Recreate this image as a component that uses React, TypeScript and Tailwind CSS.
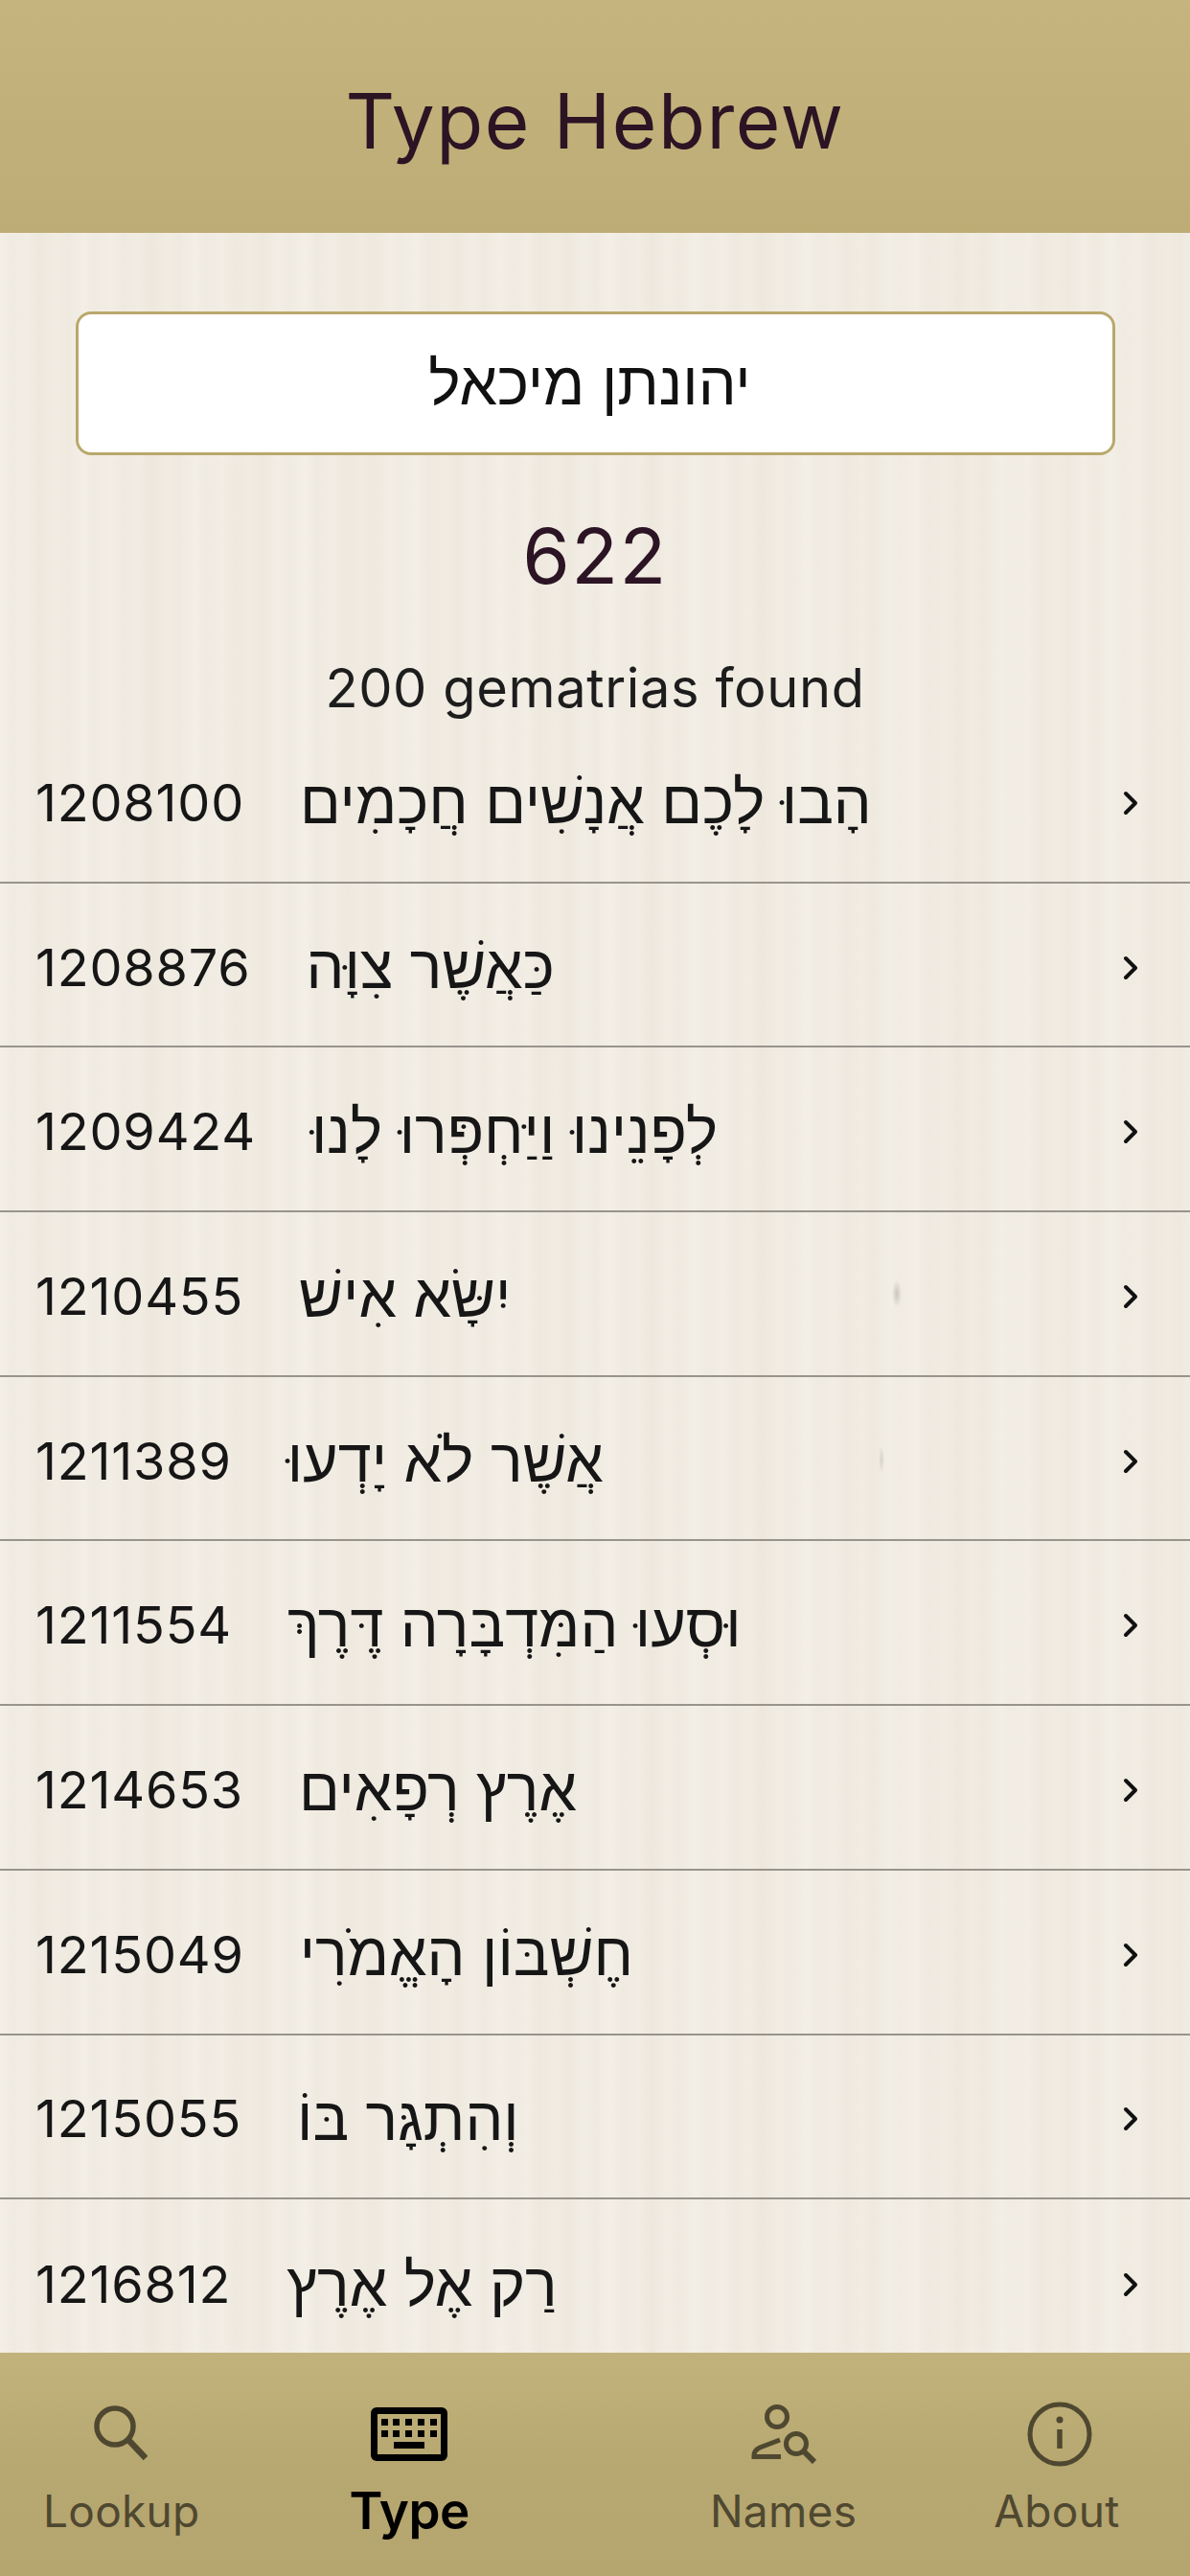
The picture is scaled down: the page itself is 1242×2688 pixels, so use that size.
const rows = [
  { code: "1208100", text: "הָבוּ לָכֶם אֲנָשִׁים חֲכָמִים" },
  { code: "1208876", text: "כַּאֲשֶׁר צִוָּה" },
  { code: "1209424", text: "לְפָנֵינוּ וַיַּחְפְּרוּ לָנוּ" },
  { code: "1210455", text: "יִשָּׂא אִישׁ" },
  { code: "1211389", text: "אֲשֶׁר לֹא יָדְעוּ" },
  { code: "1211554", text: "וּסְעוּ הַמִּדְבָּרָה דֶּרֶךְ" },
  { code: "1214653", text: "אֶרֶץ רְפָאִים" },
  { code: "1215049", text: "חֶשְׁבּוֹן הָאֱמֹרִי" },
  { code: "1215055", text: "וְהִתְגָּר בּוֹ" },
  { code: "1216812", text: "רַק אֶל אֶרֶץ" },
];

function SearchIcon() {
  return (
    <svg viewBox="0 0 58 60" className="h-[60px] w-[58px]" fill="none" stroke="currentColor" strokeWidth="5.5">
      <circle cx="22" cy="22" r="19" />
      <path d="M36 36 L54 55" strokeWidth="6.5" />
    </svg>
  );
}

function KeyboardIcon() {
  return (
    <svg viewBox="0 0 80 56" className="h-[56px] w-[80px]" fill="currentColor">
      <path
        fillRule="evenodd"
        d="M6 0h68a6 6 0 0 1 6 6v44a6 6 0 0 1-6 6H6a6 6 0 0 1-6-6V6a6 6 0 0 1 6-6zm1 7v42h66V7z"
      />
      <rect x="11" y="12" width="7" height="7" />
      <rect x="23" y="12" width="7" height="7" />
      <rect x="36" y="12" width="7" height="7" />
      <rect x="49" y="12" width="7" height="7" />
      <rect x="62" y="12" width="7" height="7" />
      <rect x="11" y="24" width="7" height="7" />
      <rect x="23" y="24" width="7" height="7" />
      <rect x="36" y="24" width="7" height="7" />
      <rect x="49" y="24" width="7" height="7" />
      <rect x="62" y="24" width="7" height="7" />
      <rect x="24" y="36" width="32" height="7" />
    </svg>
  );
}

function NamesIcon() {
  return (
    <svg viewBox="0 0 68 62" className="h-[62px] w-[68px]" fill="none" stroke="currentColor" strokeWidth="5">
      <circle cx="27" cy="13" r="10.5" />
      <path d="M30 37 L9 45 Q3 48 3 53 L3 54.5 H31" />
      <circle cx="47" cy="41" r="10.5" />
      <path d="M55 49 L66 60" strokeWidth="6" />
    </svg>
  );
}

function InfoIcon() {
  return (
    <svg viewBox="0 0 68 68" className="ml-[7px] h-[68px] w-[68px]" fill="none" stroke="currentColor" strokeWidth="5">
      <circle cx="34" cy="34" r="31" />
      <circle cx="34" cy="19" r="3.5" fill="currentColor" stroke="none" />
      <path d="M34 29 V49" strokeWidth="5.5" />
    </svg>
  );
}

function Chevron() {
  return (
    <svg viewBox="0 0 16 26" className="h-[26px] w-[16px]" fill="none" stroke="#111" strokeWidth="4" strokeLinecap="round" strokeLinejoin="round">
      <path d="M3 3 L13 13 L3 23" />
    </svg>
  );
}

function Tab({ label, icon, active, className }: { label: string; icon: React.ReactNode; active?: boolean; className: string }) {
  return (
    <div className={`flex flex-col items-center ${className}`}>
      <div className="flex h-[68px] items-center">{icon}</div>
      <span
        className={
          active
            ? "mt-[16px] text-[53px] leading-[60px] font-semibold tracking-[-0.5px] text-black"
            : "mt-[18px] text-[46px] leading-[56px] tracking-[0.3px] text-[#4f4830]"
        }
      >
        {label}
      </span>
    </div>
  );
}

export default function App() {
  return (
    <div className="flex h-[2688px] w-[1242px] flex-col overflow-hidden font-['Inter',sans-serif]">
      <header className="flex h-[243px] shrink-0 items-center justify-center bg-gradient-to-b from-[#c5b47d] to-[#bdac75] pt-[8px]">
        <h1 className="text-[80px] leading-none font-[435] tracking-[1.5px] text-[#2c1424]">Type Hebrew</h1>
      </header>

      <main className="flex min-h-0 flex-1 flex-col overflow-hidden bg-[#f3eee5] bg-[radial-gradient(ellipse_5px_14px_at_936px_1107px,#c9c5bb,transparent),radial-gradient(ellipse_3px_14px_at_920px_1280px,#d6d1c6,transparent),repeating-linear-gradient(90deg,#ffffff08_0px,#6b5a3005_13px,#ffffff0a_29px,#6b5a3006_41px,#ffffff06_58px),repeating-linear-gradient(90deg,#ffffff0a_0px,#7a653205_47px,#ffffff08_101px,#7a653206_163px,#ffffff0a_211px)]">
        <div className="mr-[78px] ml-[79px] mt-[82px] flex h-[150px] shrink-0 items-center justify-center rounded-[16px] border-[3px] border-[#b9a86c] bg-white">
          <span dir="rtl" className="mr-[12px] font-['Liberation_Sans',sans-serif] text-[63px] leading-none text-[#111]">
            יהונתן מיכאל
          </span>
        </div>
        <p className="mt-[60px] shrink-0 text-center text-[80px] leading-[90px] tracking-[1.5px] text-[#2c1424]">622</p>
        <p className="mt-[61px] shrink-0 text-center text-[56px] leading-[64px] tracking-[0.6px] text-[#1d1d1d]">200 gematrias found</p>

        <ul className="mt-[0px] shrink-0">
          {rows.map((row) => (
            <li key={row.code} className="flex h-[171.7px] items-center border-b-2 border-[#97948c] pt-[6px] pr-[54px] pl-[37px] text-[#161616] last:border-b-0">
              <span className="text-[54px] leading-none tracking-[0.8px]">{row.code}</span>
              <span dir="rtl" className="ml-[58px] font-['Liberation_Sans',sans-serif] text-[63px] leading-none">
                {row.text}
              </span>
              <span className="ml-auto">
                <Chevron />
              </span>
            </li>
          ))}
        </ul>
      </main>

      <footer className="flex h-[233px] shrink-0 items-start bg-gradient-to-b from-[#c2b27b] via-[#b7a770] to-[#b5a56e] pt-[51px] text-[#4f4830]">
        <Tab label="Lookup" icon={<SearchIcon />} className="ml-[45px]" />
        <Tab label="Type" icon={<span className="text-black"><KeyboardIcon /></span>} active className="ml-[156px]" />
        <Tab label="Names" icon={<NamesIcon />} className="ml-[251px]" />
        <Tab label="About" icon={<InfoIcon />} className="ml-[143px]" />
      </footer>
    </div>
  );
}
